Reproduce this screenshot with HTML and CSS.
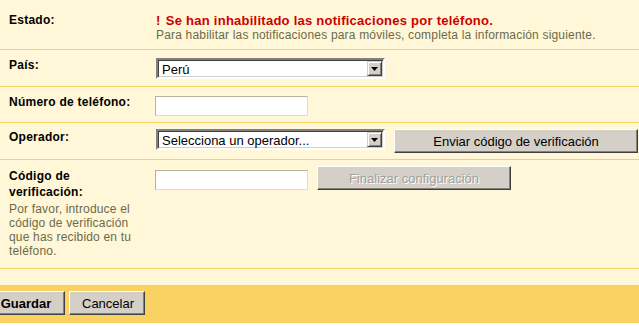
FILE: index.html
```html
<!DOCTYPE html>
<html lang="es">
<head>
    <meta charset="UTF-8">
    <title>Notificaciones para móviles</title>
    <link rel="stylesheet" href="styles.css">
</head>
<body>
    <div class="panel">
        <table class="settings">
            <tr class="row-status">
                <th>Estado:</th>
                <td>
                    <div class="status"><span class="bang">!</span> Se han inhabilitado las notificaciones por teléfono.</div>
                    <div class="hint">Para habilitar las notificaciones para móviles, completa la información siguiente.</div>
                </td>
            </tr>
            <tr class="row-country">
                <th>País:</th>
                <td>
                    <div class="combo wide">
                        <select><option>Perú</option></select>
                        <span class="arrow"><svg width="7" height="4" viewBox="0 0 7 4"><path d="M0 0h7L3.5 4z" fill="#000"/></svg></span>
                    </div>
                </td>
            </tr>
            <tr class="row-phone">
                <th class="nowrap">Número de teléfono:</th>
                <td><input type="text" class="field"></td>
            </tr>
            <tr class="row-carrier">
                <th>Operador:</th>
                <td>
                    <div class="controls">
                        <div class="combo wide">
                            <select><option>Selecciona un operador...</option></select>
                            <span class="arrow"><svg width="7" height="4" viewBox="0 0 7 4"><path d="M0 0h7L3.5 4z" fill="#000"/></svg></span>
                        </div>
                        <button class="btn send">Enviar código de verificación</button>
                    </div>
                </td>
            </tr>
            <tr class="row-code">
                <th>
                    Código de verificación:
                    <div class="note">Por favor, introduce el código de verificación que has recibido en tu teléfono.</div>
                </th>
                <td>
                    <div class="controls">
                        <input type="text" class="field code">
                        <button class="btn finish" disabled>Finalizar configuración</button>
                    </div>
                </td>
            </tr>
        </table>
        <div class="spacer"></div>
    </div>
    <div class="footer">
        <button class="btn save">Guardar</button>
        <button class="btn cancel">Cancelar</button>
    </div>
</body>
</html>
```

FILE: styles.css
```css
html, body {
    margin: 0;
    padding: 0;
    background-color: #fff;
    font-family: Arial, "Liberation Sans", sans-serif;
    font-size: 13px;
    color: #000;
}

.panel {
    background-color: #FFF7D7;
}

table.settings {
    width: 100%;
    table-layout: fixed;
    border-collapse: collapse;
}

.settings th, .settings td {
    border-bottom: 1px solid #FAD163;
    vertical-align: top;
    padding: 8px 0 7px 0;
    line-height: 15px;
}

.settings th {
    width: 124px;
    padding-left: 9px;
    padding-right: 23px;
    text-align: left;
    font-size: 12px;
    letter-spacing: 0.25px;
    font-weight: bold;
}

.settings th.nowrap {
    white-space: nowrap;
}

/* alturas de cada fila */
.row-status th, .row-status td {
    padding-top: 13px;
    padding-bottom: 7px;
}

.row-country th, .row-country td {
    padding-top: 8px;
    padding-bottom: 7px;
}

.row-phone th, .row-phone td {
    padding-top: 8px;
    padding-bottom: 6px;
}

.row-carrier th {
    padding-top: 7px;
    padding-bottom: 6px;
}

.row-carrier td {
    padding-top: 6px;
    padding-bottom: 6px;
}

.row-code th {
    padding-top: 8px;
    padding-bottom: 10px;
    line-height: 16px;
}

.row-code td {
    padding-top: 6px;
    padding-bottom: 6px;
}

.status {
    color: #CC0000;
    font-weight: bold;
    letter-spacing: 0.25px;
}

.bang {
    display: inline-block;
    width: 6px;
}

.hint, .note {
    color: #6B6B4B;
    font-size: 12px;
    font-weight: normal;
    letter-spacing: 0.18px;
    line-height: 14px;
}

.note {
    margin-top: 2px;
    line-height: 14px;
}

.controls {
    display: flex;
    align-items: flex-start;
    gap: 9px;
}

/* lista desplegable estilo clásico */
.combo {
    display: flex;
    box-sizing: border-box;
    height: 21px;
    background-color: #fff;
    border: 2px solid;
    border-color: #808080 #fff #fff #808080;
    box-shadow: inset 1px 1px #404040, inset -1px -1px #D4D0C8;
}

.combo.wide {
    width: 229px;
}

.combo select {
    flex: 1;
    min-width: 0;
    appearance: none;
    -webkit-appearance: none;
    border: none;
    background: transparent;
    font-family: Arial, "Liberation Sans", sans-serif;
    font-size: 13px;
    padding: 0 0 0 3px;
    margin: 1px 0 0 1px;
    outline: none;
    color: #000;
}

.arrow {
    display: flex;
    align-items: center;
    justify-content: center;
    width: 15px;
    height: 15px;
    margin: 1px 1px 0 0;
    box-sizing: border-box;
    background-color: #D4D0C8;
    border: 1px solid;
    border-color: #D4D0C8 #404040 #404040 #D4D0C8;
    box-shadow: inset 1px 1px #fff, inset -1px -1px #808080;
}

.field {
    box-sizing: border-box;
    width: 153px;
    height: 20px;
    margin: 1px 0 0 -1px;
    padding: 1px 3px;
    border: 1px solid;
    border-color: #B8B39A #E2DDC6 #E2DDC6 #B8B39A;
    background-color: #fff;
    font-family: Arial, "Liberation Sans", sans-serif;
    font-size: 13px;
}

.field.code {
    margin-top: 4px;
}

.btn {
    box-sizing: border-box;
    height: 24px;
    padding: 0 12px;
    background-color: #D4D0C8;
    border: 1px solid;
    border-color: #fff #404040 #404040 #fff;
    box-shadow: inset -1px -1px #808080;
    font-family: Arial, "Liberation Sans", sans-serif;
    font-size: 13px;
    color: #000;
    cursor: pointer;
}

.btn.send {
    width: 244px;
    height: 24px;
}

.btn.finish {
    width: 194px;
    color: #A0A0A0;
    text-shadow: 1px 1px #fff;
    cursor: default;
}

.spacer {
    height: 16px;
}

.footer {
    display: flex;
    gap: 4px;
    background-color: #FAD163;
    padding: 6px 0 8px 0;
    margin-bottom: 3px;
}

.btn.save {
    font-weight: bold;
    margin-left: -13px;
    width: 78px;
}

.btn.cancel {
    width: 76px;
}
```
